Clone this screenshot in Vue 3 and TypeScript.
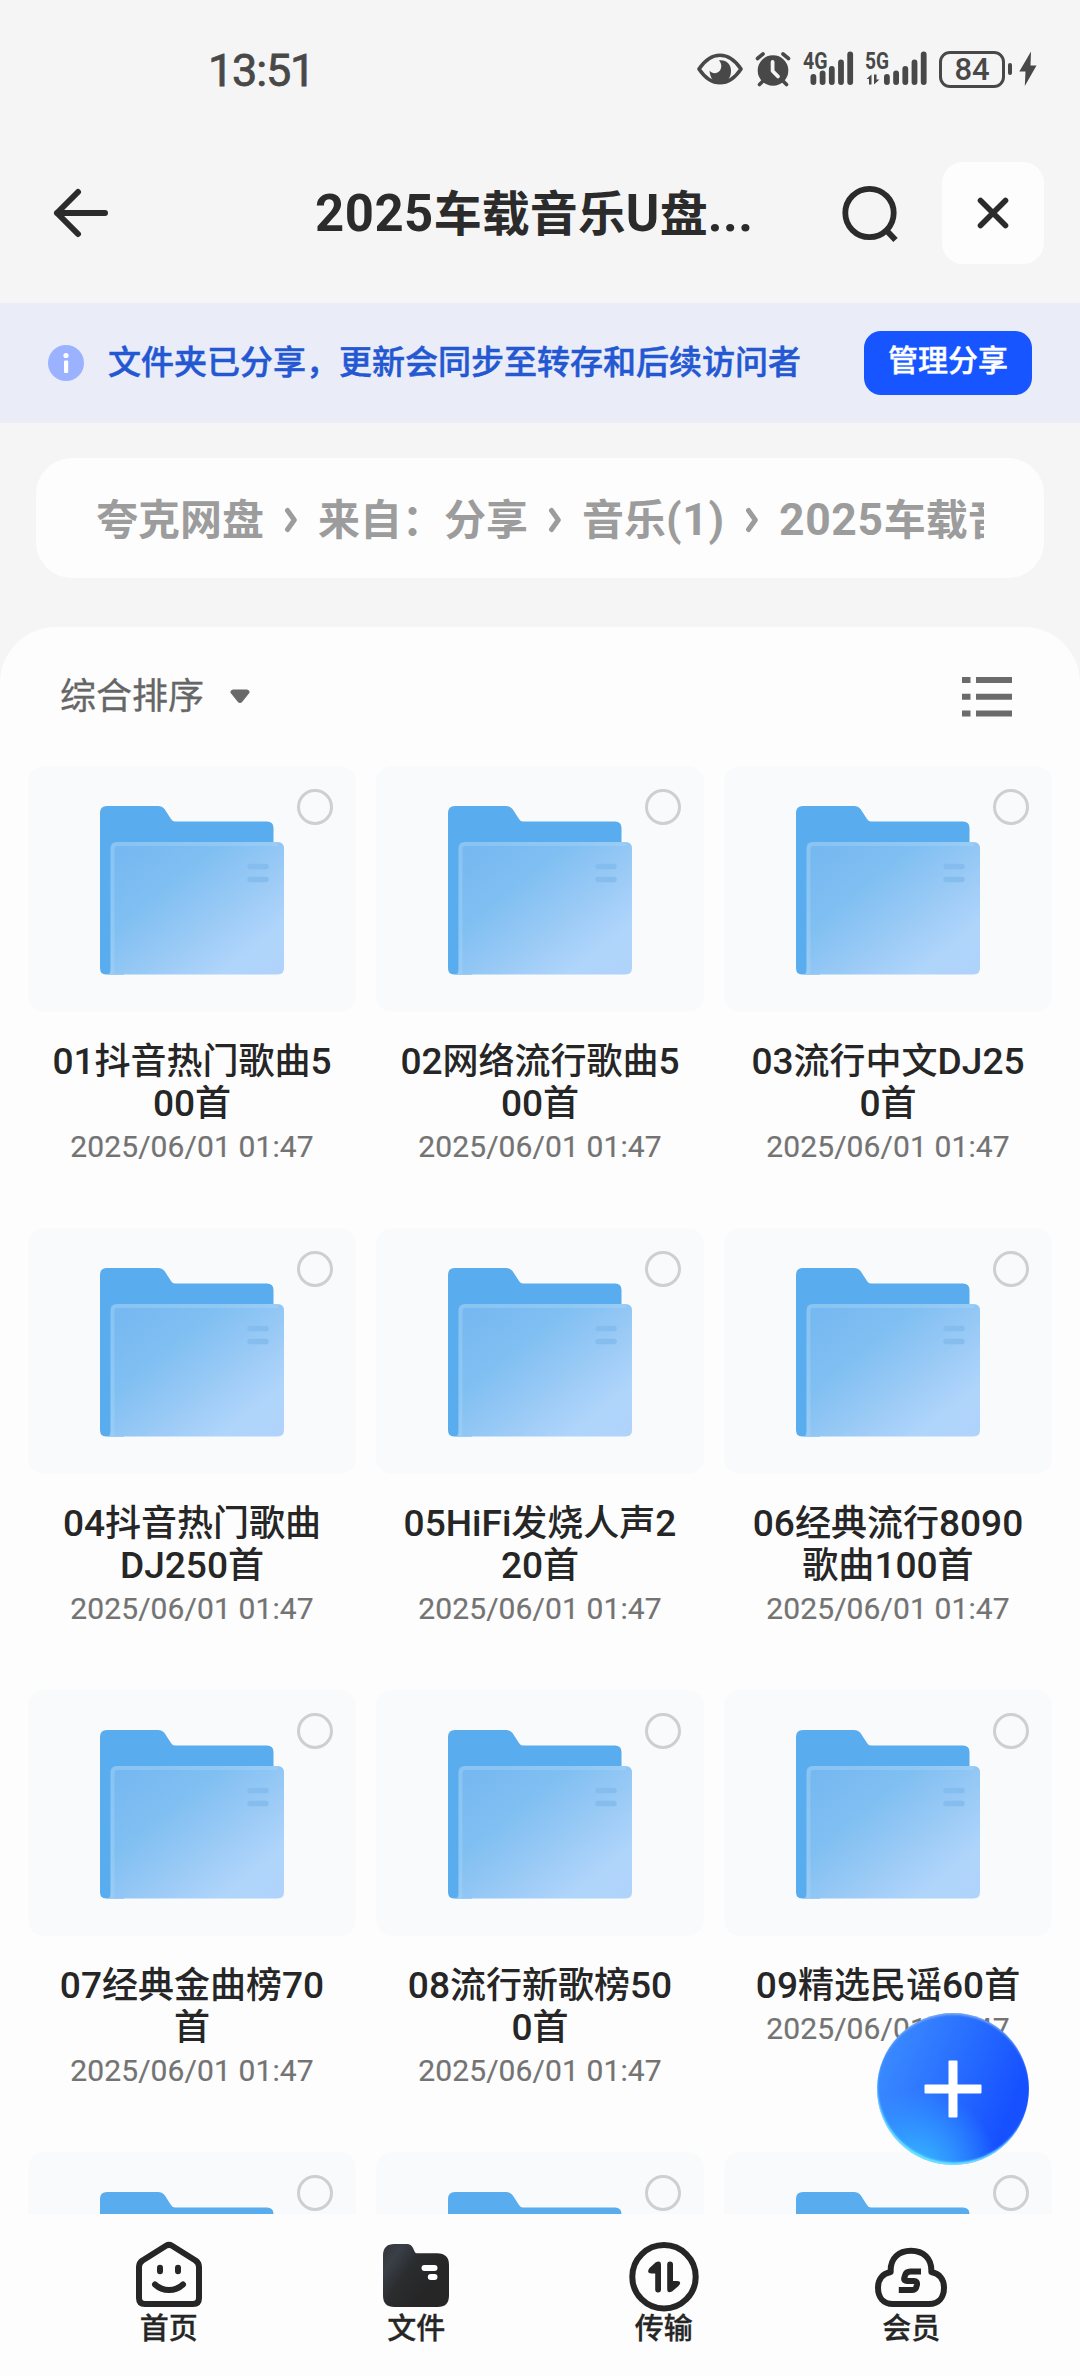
<script setup lang="ts">
interface Run {
  text: string
  latin: boolean
}

interface FolderItem {
  lines: string[]
  date: string
}

interface Tab {
  key: 'home' | 'files' | 'transfer' | 'member'
  label: string
}

const date = '2025/06/01 01:47'

const folders: FolderItem[] = [
  { lines: ['01抖音热门歌曲5', '00首'], date },
  { lines: ['02网络流行歌曲5', '00首'], date },
  { lines: ['03流行中文DJ25', '0首'], date },
  { lines: ['04抖音热门歌曲', 'DJ250首'], date },
  { lines: ['05HiFi发烧人声2', '20首'], date },
  { lines: ['06经典流行8090', '歌曲100首'], date },
  { lines: ['07经典金曲榜70', '首'], date },
  { lines: ['08流行新歌榜50', '0首'], date },
  { lines: ['09精选民谣60首'], date },
  { lines: [], date: '' },
  { lines: [], date: '' },
  { lines: [], date: '' },
]

const crumbs: string[] = ['夸克网盘', '来自：分享', '音乐(1)', '2025车载音']

const tabs: Tab[] = [
  { key: 'home', label: '首页' },
  { key: 'files', label: '文件' },
  { key: 'transfer', label: '传输' },
  { key: 'member', label: '会员' },
]

// Latin runs are set slightly larger than the Chinese text beside them.
function runs(text: string): Run[] {
  const parts = text.match(/[\x20-\x7e]+|[^\x20-\x7e]+/g) ?? []
  return parts.map((part) => ({ text: part, latin: /^[\x20-\x7e]/.test(part) }))
}

const signalBars = [
  { x: 0, top: 23 },
  { x: 9.2, top: 19.5 },
  { x: 18.4, top: 15 },
  { x: 27.6, top: 8.5 },
  { x: 36.8, top: 0.5 },
]
</script>

<template>
  <div class="screen">
    <div class="status">
      <span class="clock">13:51</span>
      <div class="status-icons">
        <svg class="eye" width="46" height="34" viewBox="0 0 46 34">
          <path d="M2 17C8 8 15 3.200 23 3.200S38 8 44 17C38 26 31 30.800 23 30.800S8 26 2 17Z" fill="none" stroke="#484848" stroke-width="3.600" stroke-linejoin="round" />
          <path d="M22 8.500C29 7.500 34 12 34 19C34 26 29.500 31.500 23.500 31.500C17 31.500 13 26 12.500 18.500C14.500 21 17.500 22 20.500 20.500C25 18.200 25.500 12 22 8.500Z" fill="#484848" />
        </svg>
        <svg class="alarm" width="36" height="36" viewBox="0 0 36 36">
          <circle cx="18" cy="19.500" r="15.300" fill="#484848" />
          <path d="M2.500 7.500L8 3M33.500 7.500L28 3M8 30L4.500 33.500M28 30L31.500 33.500" stroke="#484848" stroke-width="3.600" stroke-linecap="round" />
          <path d="M17.600 11V20L23 25.500" fill="none" stroke="#f5f5f5" stroke-width="3.800" stroke-linecap="round" stroke-linejoin="round" />
        </svg>
        <svg class="signal four" width="52" height="36" viewBox="0 0 52 36">
          <text x="0" y="17.500" textLength="24.500" lengthAdjust="spacingAndGlyphs" class="net">4G</text>
          <rect v-for="bar in signalBars" :key="bar.x" :x="7.500 + bar.x" :y="bar.top" width="5.800" :height="34 - bar.top" rx="2.900" fill="#484848" />
        </svg>
        <svg class="signal five" width="64" height="36" viewBox="0 0 64 36">
          <text x="0" y="17.500" textLength="24" lengthAdjust="spacingAndGlyphs" class="net">5G</text>
          <path d="M6.500 33.500V23.500L1.500 28H4V33.500ZM9 23.500V33.500L14.500 28.500H11.500V23.500Z" fill="#484848" />
          <rect v-for="bar in signalBars" :key="bar.x" :x="19 + bar.x" :y="bar.top" width="5.800" :height="34 - bar.top" rx="2.900" fill="#484848" />
        </svg>
        <div class="battery">84</div>
        <div class="nub"></div>
        <svg class="bolt" width="18" height="36" viewBox="0 0 18 36">
          <path d="M12 .5L.3 20.500H6.500L5.800 35L17.500 14.500H11.500Z" fill="#484848" />
        </svg>
      </div>
    </div>

    <header class="header">
      <svg class="back" width="56" height="52" viewBox="0 0 56 52">
        <path d="M25 5L4 26L25 47M4 26H52" fill="none" stroke="#2b2b2b" stroke-width="6" stroke-linecap="round" stroke-linejoin="round" />
      </svg>
      <h1 class="title"><span v-for="(run, i) in runs('2025车载音乐U盘...')" :key="i" :class="{ latin: run.latin }">{{ run.text }}</span></h1>
      <svg class="search" width="60" height="60" viewBox="0 0 60 60">
        <circle cx="28.500" cy="30" r="24.200" fill="none" stroke="#2b2b2b" stroke-width="5.800" />
        <path d="M46 48L54.500 57" stroke="#2b2b2b" stroke-width="6" />
      </svg>
      <button class="close" type="button">
        <svg width="32" height="32" viewBox="0 0 32 32">
          <path d="M3.500 3.500L28.500 28.500M28.500 3.500L3.500 28.500" stroke="#2b2b2b" stroke-width="5.600" stroke-linecap="round" />
        </svg>
      </button>
    </header>

    <div class="banner">
      <svg class="info" width="36" height="36" viewBox="0 0 36 36">
        <circle cx="18" cy="18" r="18" fill="#9ab2ff" />
        <circle cx="18" cy="10.500" r="2.600" fill="#fff" />
        <rect x="16" y="15.500" width="4.200" height="12.500" rx="1" fill="#fff" />
      </svg>
      <span class="banner-text">文件夹已分享，更新会同步至转存和后续访问者</span>
      <button class="manage" type="button">管理分享</button>
    </div>

    <nav class="crumbs">
      <div class="crumb-track">
        <template v-for="(crumb, c) in crumbs" :key="crumb">
          <svg v-if="c > 0" class="sep" width="12" height="26" viewBox="0 0 12 26">
            <path d="M2.500 3.500L9.300 13L2.500 22.500" fill="none" stroke="#9c9c9c" stroke-width="5" stroke-linecap="round" stroke-linejoin="round" />
          </svg>
          <span class="crumb"><span v-for="(run, i) in runs(crumb)" :key="i" :class="{ latin: run.latin }">{{ run.text }}</span></span>
        </template>
      </div>
    </nav>

    <main class="panel">
      <div class="toolbar">
        <span class="sort">综合排序</span>
        <svg class="caret" width="20" height="15" viewBox="0 0 20 15">
          <path d="M3 .5H17Q20.500 1.500 19.300 4L12.500 12.500Q10 15.500 7.500 12.500L.7 4Q-.5 1.500 3 .5Z" fill="#696969" />
        </svg>
        <svg class="list-mode" width="50" height="40" viewBox="0 0 50 40">
          <path d="M0 3H8.500M14 3H50M0 19.700H8.500M14 19.700H50M0 36.400H8.500M14 36.400H50" stroke="#6b6b6b" stroke-width="6" />
        </svg>
      </div>

      <div class="grid">
        <div v-for="(folder, f) in folders" :key="f" class="item">
          <div class="thumb">
            <svg class="folder" width="184" height="169" viewBox="0 0 184 169">
              <defs>
                <linearGradient :id="`front${f}`" x1="0.050" y1="0.100" x2="0.950" y2="0.950">
                  <stop offset="0" stop-color="#76b8f1" />
                  <stop offset="0.300" stop-color="#80bff2" />
                  <stop offset="0.620" stop-color="#9ccbf6" />
                  <stop offset="0.850" stop-color="#b0d5fb" />
                  <stop offset="1" stop-color="#afd3fa" />
                </linearGradient>
              </defs>
              <path d="M7 0H58Q62 0 64.500 3L71 13Q72.500 15.500 75 15.500H167Q173.500 15.500 173.500 22V60H24V168.500H6Q0 168.500 0 162V7Q0 0 7 0Z" fill="#59acee" />
              <path d="M16 36H177.500Q184 36 184 42.500V162Q184 168.500 177.500 168.500H8Q10.500 167 10.500 163V42Q10.500 36 16 36Z" :fill="`url(#front${f})`" />
              <path d="M12.500 168V43Q12.500 38 17.500 38H178" fill="none" stroke="#a8d6f8" stroke-opacity=".4" stroke-width="4" />
              <path d="M150 60.500H166M150 73.500H166" stroke="#86bdef" stroke-width="5.500" stroke-linecap="round" />
            </svg>
            <span class="check"></span>
          </div>
          <div class="name">
            <div v-for="line in folder.lines" :key="line"><span v-for="(run, i) in runs(line)" :key="i" :class="{ latin: run.latin }">{{ run.text }}</span></div>
          </div>
          <div class="date">{{ folder.date }}</div>
        </div>
      </div>
    </main>

    <nav class="tabs">
      <div v-for="tab in tabs" :key="tab.key" class="tab">
        <svg v-if="tab.key === 'home'" width="72" height="72" viewBox="0 0 72 72">
          <path d="M33 5.800Q36 4 39 5.800L62.500 20.500Q66 23 66 27V58Q66 64 60 64H12Q6 64 6 58V27Q6 23 9.500 20.500Z" fill="none" stroke="#262626" stroke-width="6" stroke-linejoin="round" />
          <path d="M27 27.800V31.200M45 27.800V31.200" stroke="#262626" stroke-width="6" stroke-linecap="round" />
          <path d="M22 44.500Q28 50 36 50T50 44.500" fill="none" stroke="#262626" stroke-width="6" stroke-linecap="round" />
        </svg>
        <svg v-else-if="tab.key === 'files'" width="72" height="72" viewBox="0 0 72 72">
          <defs>
            <linearGradient id="filesTab" x1="0" y1=".1" x2=".75" y2=".6">
              <stop offset="0" stop-color="#34373b" />
              <stop offset=".22" stop-color="#3a3f48" />
              <stop offset=".55" stop-color="#2a2c2e" />
              <stop offset="1" stop-color="#262626" />
            </linearGradient>
          </defs>
          <path d="M14.500 4H27Q31 4 33 8L34.800 12Q35.300 13.300 37 13.300H57Q69 13.300 69 25V55.500Q69 67 57.500 67H14.500Q3 67 3 55.500V15.500Q3 4 14.500 4Z" fill="url(#filesTab)" />
          <path d="M44.500 28H54.500M50.800 37H54.500" stroke="#fff" stroke-width="6" stroke-linecap="round" />
        </svg>
        <svg v-else-if="tab.key === 'transfer'" width="72" height="72" viewBox="0 0 72 72">
          <circle cx="36" cy="36.800" r="31.700" fill="none" stroke="#262626" stroke-width="6" />
          <path d="M27.800 22.200Q33 20 33 25V49.500Q33 52.500 30 52.500Q27.200 52.500 27.200 49.500V33.500H23.500Q18 33 21.500 28Z" fill="#262626" />
          <path d="M39.200 24.500Q39.200 21.500 42 21.500Q45 21.500 45 24.500V41H49Q54.500 41.500 50.500 46L44 51.500Q39.200 54 39.200 49Z" fill="#262626" />
        </svg>
        <svg v-else width="72" height="72" viewBox="0 0 72 72">
          <path d="M18 64C8 64 3 57 3 47.500C3 39.500 7.500 33.500 15.700 32C15 18 24 10.700 36 10.700S57 18 56.300 32C64.500 33.500 69 39.500 69 47.500C69 57 64 64 54 64Z" fill="none" stroke="#262626" stroke-width="6" stroke-linejoin="round" />
          <path d="M46 31.500H35.500Q31 31.500 30 35.500L29.200 38.500Q28.800 41 32 41H39Q42.500 41 42 44.500L41 48Q40 50 37 50H23.800" fill="none" stroke="#262626" stroke-width="6" />
        </svg>
        <span>{{ tab.label }}</span>
      </div>
    </nav>

    <button class="fab" type="button">
      <svg width="58" height="58" viewBox="0 0 58 58">
        <rect x="24.500" y=".5" width="9" height="57" rx="1" fill="#fff" />
        <rect x=".5" y="24.500" width="57" height="9" rx="1" fill="#fff" />
      </svg>
    </button>
  </div>
</template>

<style>
body {
  margin: 0;
  background: #f5f5f5;
}
</style>

<style scoped>
.screen {
  position: relative;
  display: flex;
  flex-direction: column;
  width: 1080px;
  height: 2376px;
  overflow: hidden;
  background: #f5f5f5;
  color: #2b2b2b;
  font-family: Roboto, 'Noto Sans CJK SC', sans-serif;
}

button {
  display: flex;
  align-items: center;
  justify-content: center;
  padding: 0;
  border: 0;
  font-family: inherit;
}

svg {
  display: block;
  flex: none;
}

.latin {
  font-size: 1.06em;
  line-height: 1;
}

.status {
  display: flex;
  box-sizing: border-box;
  flex: none;
  align-items: flex-start;
  justify-content: space-between;
  height: 140px;
  padding: 45px 43px 0 208px;
}

.clock {
  color: #484848;
  font-size: 45px;
  line-height: 50px;
  letter-spacing: -1.2px;
  transform: translateY(1px);
  -webkit-text-stroke: 0.8px #484848;
}

.status-icons {
  display: flex;
  align-items: center;
  height: 48px;
}

.alarm {
  margin-left: 12px;
}

.signal {
  overflow: visible;
}

.signal.four {
  margin-left: 12px;
}

.signal.five {
  margin-left: 10px;
}

.net {
  fill: #484848;
  font-size: 23px;
  font-weight: 700;
}

.battery {
  box-sizing: border-box;
  width: 66px;
  height: 37px;
  margin-left: 10px;
  border: 3px solid #484848;
  border-radius: 11px;
  color: #484848;
  font-size: 31px;
  font-weight: 500;
  line-height: 32px;
  text-align: center;
}

.nub {
  width: 4px;
  height: 12px;
  margin-left: 3px;
  border-radius: 2px;
  background: #484848;
}

.bolt {
  margin-left: 7px;
}

.header {
  display: flex;
  flex: none;
  align-items: center;
  height: 146px;
  margin-bottom: 17px;
}

.back {
  margin-left: 53px;
}

.title {
  width: 440px;
  margin: 3px 0 0 206px;
  font-size: 48px;
  font-weight: 700;
  line-height: 70px;
  white-space: nowrap;
}

.title .latin {
  letter-spacing: 0.5px;
}

.search {
  margin-left: 86px;
}

.close {
  width: 102px;
  height: 102px;
  margin-left: 41px;
  border-radius: 21px;
  background: #fdfdfd;
}

.banner {
  display: flex;
  flex: none;
  align-items: center;
  height: 120px;
  background: #eaecf8;
}

.info {
  margin-left: 48px;
}

.banner-text {
  width: 756px;
  margin-left: 24px;
  color: #2358d2;
  font-size: 33px;
  font-weight: 500;
  line-height: 48px;
  white-space: nowrap;
  -webkit-text-stroke: 0.5px #2358d2;
}

.manage {
  box-sizing: border-box;
  width: 168px;
  height: 64px;
  padding-bottom: 10px;
  border-radius: 17px;
  background: #1655ff;
  color: #fff;
  font-size: 30px;
  font-weight: 500;
  -webkit-text-stroke: 0.4px #fff;
}

.crumbs {
  flex: none;
  height: 120px;
  margin: 35px 36px 49px;
  padding: 0 60px;
  border-radius: 36px;
  background: #fdfdfd;
}

.crumb-track {
  display: flex;
  align-items: center;
  height: 100%;
  overflow: hidden;
}

.crumb {
  flex: none;
  margin-top: 5px;
  color: #9c9c9c;
  font-size: 42px;
  font-weight: 700;
  line-height: 60px;
  white-space: nowrap;
}

.crumb .latin {
  letter-spacing: 0.7px;
}

.sep {
  margin: 4px 21px 0;
}

.panel {
  flex: 1;
  min-height: 0;
  overflow: hidden;
  border-radius: 56px 56px 0 0;
  background: #fdfdfd;
}

.toolbar {
  display: flex;
  align-items: center;
  height: 139px;
  padding: 0 68px 0 60px;
}

.sort {
  color: #666;
  font-size: 36px;
  line-height: 52px;
  -webkit-text-stroke: 0.3px #666;
}

.caret {
  margin-left: 26px;
}

.list-mode {
  margin-left: auto;
}

.grid {
  display: grid;
  grid-template-columns: repeat(3, 328px);
  grid-auto-rows: 462px;
  column-gap: 20px;
  padding: 0 28px;
}

.item {
  text-align: center;
}

.thumb {
  position: relative;
  height: 246px;
  border-radius: 16px;
  background: #f9fafb;
}

.folder {
  padding: 40px 0 0 72px;
}

.check {
  position: absolute;
  top: 23px;
  right: 23px;
  box-sizing: border-box;
  width: 36px;
  height: 36px;
  border: 3.500px solid #cecfd0;
  border-radius: 50%;
}

.name {
  padding-top: 29px;
  color: #262626;
  font-size: 36px;
  font-weight: 500;
  white-space: nowrap;
}

.name > div {
  height: 42px;
  line-height: 42px;
}

.name .latin {
  font-size: 1.03em;
}

.date {
  margin-top: 4px;
  color: #737373;
  font-size: 30px;
  line-height: 36px;
  letter-spacing: 0.1px;
  -webkit-text-stroke: 0.2px #737373;
}

.tabs {
  display: flex;
  flex: none;
  height: 162px;
  padding: 0 45px;
  background: #fdfdfd;
}

.tab {
  display: flex;
  flex: 1;
  flex-direction: column;
  align-items: center;
  padding-top: 26px;
  color: #262626;
  font-size: 29px;
  font-weight: 500;
  line-height: 35px;
  -webkit-text-stroke: 0.3px #262626;
}

.fab {
  position: absolute;
  top: 2013px;
  left: 877px;
  width: 152px;
  height: 152px;
  border-radius: 50%;
  background:
    radial-gradient(circle at 26% 104%, #37bcff 0%, rgba(52, 165, 255, 0.7) 20%, rgba(45, 140, 255, 0) 42%),
    linear-gradient(112deg, #3c8cff 8%, #2970ff 45%, #1650ff 82%);
  box-shadow: inset 0 3px 2px -1px #77a6f0, inset 1px -3px 2px -0.5px #6be4ff;
}
</style>
